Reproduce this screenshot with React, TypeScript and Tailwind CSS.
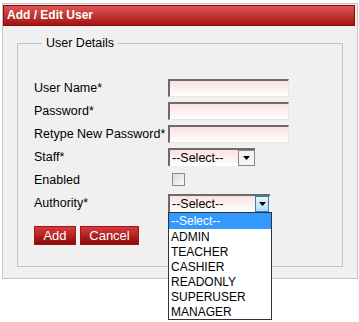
import React from "react";

const rows: { label: string; kind: "text" | "select" | "check" | "authority" }[] = [
  { label: "User Name*", kind: "text" },
  { label: "Password*", kind: "text" },
  { label: "Retype New Password*", kind: "text" },
  { label: "Staff*", kind: "select" },
  { label: "Enabled", kind: "check" },
  { label: "Authority*", kind: "authority" },
];

const authorities = ["--Select--", "ADMIN", "TEACHER", "CASHIER", "READONLY", "SUPERUSER", "MANAGER"];

function TextInput() {
  return (
    <div className="h-[18px] w-[121px] border-t-2 border-l-2 border-r border-b border-t-[#6b6b6b] border-l-[#6b6b6b] border-r-[#e6e6e6] border-b-[#e6e6e6] bg-gradient-to-b from-[#fbe1e1] to-white" />
  );
}

function Arrow() {
  return (
    <svg width="7" height="4" viewBox="0 0 7 4">
      <path d="M0 0h7L3.5 4z" fill="#000" />
    </svg>
  );
}

function SelectBox({ width, open }: { width: string; open?: boolean }) {
  return (
    <div className={`flex h-[18px] ${width} border-t-2 border-l-2 border-t-[#6b6b6b] border-l-[#6b6b6b] bg-gradient-to-b from-[#fbe1e1] to-white`}>
      <div className="flex-1 pl-[2px] text-[12.5px] leading-[16px] text-black">--Select--</div>
      {open ? (
        <div className="mr-[1px] flex w-[14px] items-center justify-center border border-[#3c7fb1] bg-gradient-to-b from-[#e5f4fd] to-[#b3dcf6]">
          <Arrow />
        </div>
      ) : (
        <div className="flex w-[17px] items-center justify-center border border-[#888] bg-[#f4f4f4]">
          <Arrow />
        </div>
      )}
    </div>
  );
}

function RedButton({ children, width }: { children: React.ReactNode; width: string }) {
  return (
    <button className={`h-[19px] ${width} border border-[#a41414] bg-gradient-to-b from-[#d63a3a] to-[#8e0606] text-[13px] leading-[17px] text-white`}>
      {children}
    </button>
  );
}

export default function App() {
  return (
    <div className="relative h-[322px] w-[359px] bg-white pt-[3px] pl-[2px] font-['Liberation_Sans',Arial,sans-serif] text-black">
      <div className="h-[276px] w-[356px] border border-[#c6c6c6] bg-[#f0f0f0] pt-[1px]">
        <div className="mr-[2px] h-[21px] border border-[#8c0a0a] bg-gradient-to-b from-[#dc5454] to-[#a40e0e] pl-[3px] text-[12px] font-bold leading-[19px] text-white">
          Add / Edit User
        </div>
        <fieldset className="mt-[10px] ml-[14px] h-[231px] w-[326px] border border-[#c2c2c2] pl-[16px]">
          <legend className="ml-[8px] px-[4px] text-[12.5px] leading-[15px]">User Details</legend>
          <div className="mt-[25px]">
            {rows.map((r) => (
              <div key={r.label} className="flex h-[23px] items-center">
                <div className="w-[134px] pt-[2px] text-[12.5px] leading-[15px]">{r.label}</div>
                {r.kind === "text" && <TextInput />}
                {r.kind === "select" && <SelectBox width="w-[87px]" />}
                {r.kind === "check" && (
                  <div className="ml-[4px] h-[13px] w-[13px] border border-[#8a8a8a] bg-gradient-to-br from-[#dcdcdc] to-[#f8f8f8]" />
                )}
                {r.kind === "authority" && (
                  <div className="relative">
                    <SelectBox width="w-[102px]" open />
                    <div className="absolute top-[18px] left-0 z-10 w-[104px] border border-[#333] bg-white text-[12px] leading-[15px] text-black">
                      {authorities.map((a, i) => (
                        <div key={a} className={i === 0 ? "h-[16px] bg-[#3399ff] pl-[2px] leading-[16px] text-white" : "h-[15px] pl-[2px] leading-[16px]"}>
                          {a}
                        </div>
                      ))}
                    </div>
                  </div>
                )}
              </div>
            ))}
          </div>
          <div className="mt-[12px] flex gap-[4px]">
            <RedButton width="w-[42px]">Add</RedButton>
            <RedButton width="w-[59px]">Cancel</RedButton>
          </div>
        </fieldset>
      </div>
    </div>
  );
}
